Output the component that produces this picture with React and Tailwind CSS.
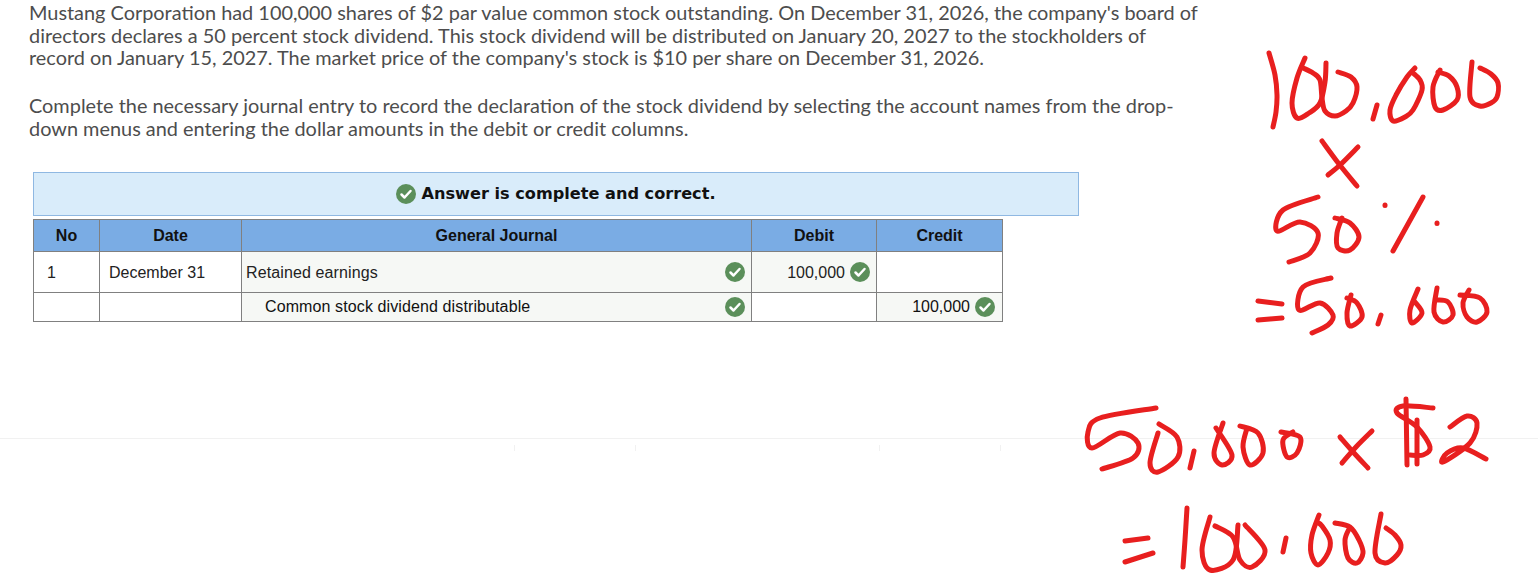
const strokes = [
  // 100,000
  [[1269,53],[1275,75],[1277,95],[1276,112],[1273,127]],
  [[1305,58],[1297,78],[1292,103],[1297,118],[1309,113],[1320,103],[1325,82],[1326,63]],
  [[1303,68],[1313,73],[1320,80],[1322,98],[1325,111],[1335,116],[1346,111],[1353,103],[1357,87],[1351,77],[1338,72]],
  [[1377,105],[1373,119]],
  [[1415,68],[1407,77],[1396,95],[1390,110],[1393,121],[1405,117],[1413,110],[1422,90],[1420,80],[1413,73]],
  [[1440,70],[1433,87],[1435,107],[1443,110],[1457,100],[1457,87],[1449,76],[1438,72]],
  [[1472,62],[1470,97],[1480,106],[1491,103],[1497,97],[1498,83],[1491,74],[1480,68]],
  [[1322,141],[1339,164],[1357,186]],
  [[1358,147],[1340,165],[1328,175]],
  // 50%
  [[1318,197],[1283,210],[1277,231],[1300,222],[1318,233],[1310,253],[1289,262]],
  [[1335,218],[1350,223],[1359,237],[1350,250],[1338,248],[1337,233],[1342,218]],
  [[1385,205],[1385,205.5]],
  [[1423,197],[1393,251]],
  [[1437,223],[1437,223.5]],
  // =50,000
  [[1258,301],[1282,304]],
  [[1258,320],[1282,318]],
  [[1331,278],[1303,287],[1299,310],[1320,303],[1333,315],[1328,325],[1312,333]],
  [[1351,295],[1347,313],[1350,326],[1362,317],[1357,303],[1347,298]],
  [[1381,315],[1378,324]],
  [[1418,289],[1410,310],[1412,323],[1422,313],[1415,302]],
  [[1437,288],[1434,312],[1443,322],[1453,315],[1448,302],[1437,300]],
  [[1460,295],[1480,298],[1487,312],[1477,322],[1467,317],[1463,303],[1469,290]],
  // 50,000 x $2
  [[1156,408],[1100,418],[1088,432],[1092,448],[1120,433],[1138,443],[1133,458],[1102,469]],
  [[1159,424],[1177,437],[1178,457],[1158,472],[1150,463],[1158,433]],
  [[1194,451],[1190,468]],
  [[1223,423],[1214,453],[1222,465],[1232,455],[1216,428]],
  [[1240,426],[1258,433],[1263,453],[1250,465],[1243,447],[1247,428]],
  [[1281,432],[1300,437],[1297,453],[1287,457],[1283,440],[1293,432]],
  [[1340,437],[1354,453],[1368,468]],
  [[1372,431],[1356,447],[1342,463]],
  [[1406,399],[1407,465]],
  [[1417,420],[1417,464]],
  [[1433,408],[1403,406],[1397,413],[1417,427],[1430,447],[1423,455],[1410,455]],
  [[1450,427],[1467,416],[1477,423],[1470,443],[1443,462],[1447,453],[1463,448],[1486,459]],
  // =100,000
  [[1125,541],[1148,538]],
  [[1125,562],[1153,553]],
  [[1187,508],[1185,540],[1183,567]],
  [[1210,517],[1202,550],[1210,570],[1233,560],[1238,525]],
  [[1215,526],[1233,537],[1240,560],[1252,567],[1265,550],[1245,525]],
  [[1286,538],[1283,552]],
  [[1319,515],[1312,535],[1311,553],[1318,565],[1328,553],[1330,540],[1322,526],[1317,522]],
  [[1335,523],[1350,527],[1359,540],[1363,553],[1357,563],[1348,558],[1345,540],[1350,527]],
  [[1381,514],[1375,553],[1385,563],[1397,555],[1401,545],[1395,535],[1386,528]],
];

// smooth the pen points with a catmull-rom curve
function toPath(pts) {
  let d = `M${pts[0][0]} ${pts[0][1]}`;
  for (let i = 0; i < pts.length - 1; i++) {
    const p0 = pts[i - 1] || pts[i];
    const p1 = pts[i];
    const p2 = pts[i + 1];
    const p3 = pts[i + 2] || p2;
    const c1x = p1[0] + (p2[0] - p0[0]) / 6;
    const c1y = p1[1] + (p2[1] - p0[1]) / 6;
    const c2x = p2[0] - (p3[0] - p1[0]) / 6;
    const c2y = p2[1] - (p3[1] - p1[1]) / 6;
    d += ` C${c1x} ${c1y} ${c2x} ${c2y} ${p2[0]} ${p2[1]}`;
  }
  return d;
}

function Check({ className = "" }) {
  return (
    <svg viewBox="0 0 20 20" className={`h-5 w-5 shrink-0 ${className}`}>
      <circle cx="10" cy="10" r="10" fill="#5b8f5a" />
      <path d="M5.5 10.5l3 3 6-6.5" fill="none" stroke="#fff" strokeWidth="2.5" strokeLinecap="round" strokeLinejoin="round" />
    </svg>
  );
}

function Head({ children, className = "" }) {
  return <th className={`border border-[#808080] bg-[#7aace4] p-0 pt-[1px] text-center font-bold text-[#111] ${className}`}>{children}</th>;
}

function Cell({ children, tinted, className = "" }) {
  return (
    <td className={`border border-[#808080] p-0 ${tinted ? "bg-[#f6f8f5]" : "bg-white"} ${className}`}>
      {children}
    </td>
  );
}

export default function App() {
  return (
    <div className="relative h-[576px] w-full overflow-hidden bg-white font-['Lato',sans-serif]">
      <div className="h-[140px] pl-[29px] pt-[1px] text-[19.9px] leading-[22.5px] text-[#4d4d4d]">
        <p>
          Mustang Corporation had 100,000 shares of $2 par value common stock outstanding. On December 31, 2026, the company's board of
          <br />
          directors declares a 50 percent stock dividend. This stock dividend will be distributed on January 20, 2027 to the stockholders of
          <br />
          record on January 15, 2027. The market price of the company's stock is $10 per share on December 31, 2026.
        </p>
        <p className="mt-[25px] leading-[23px]">
          Complete the necessary journal entry to record the declaration of the stock dividend by selecting the account names from the drop-
          <br />
          down menus and entering the dollar amounts in the debit or credit columns.
        </p>
      </div>

      <div className="ml-[33px] mt-[32px] w-[1046px]">
        <div className="flex h-[44px] items-center justify-center gap-[5px] border border-[#8fb8e2] bg-[#d9ecfa] font-['DejaVu_Sans',sans-serif] text-[16.15px] font-bold text-[#111]">
          <Check />
          <span className="pt-[1px]">Answer is complete and correct.</span>
        </div>
        <table className="mt-[3px] w-[970px] table-fixed border-collapse font-['Liberation_Sans',sans-serif] text-[16px] text-[#222]">
          <colgroup>
            <col className="w-[66px]" />
            <col className="w-[142px]" />
            <col className="w-[510px]" />
            <col className="w-[125px]" />
            <col className="w-[126px]" />
          </colgroup>
          <thead>
            <tr className="h-[32px]">
              <Head>No</Head>
              <Head>Date</Head>
              <Head>General Journal</Head>
              <Head>Debit</Head>
              <Head>Credit</Head>
            </tr>
          </thead>
          <tbody>
            <tr className="h-[41px]">
              <Cell className="pl-[13px] pt-[1px]">1</Cell>
              <Cell className="pl-[9px] pt-[1px]">December 31</Cell>
              <Cell tinted>
                <div className="flex items-center justify-between pl-[4px] pr-[6px] tracking-[0.12px]">
                  <span className="pt-[2px]">Retained earnings</span>
                  <Check />
                </div>
              </Cell>
              <Cell tinted>
                <div className="flex items-center justify-end gap-[5px] pr-[6px]">
                  <span className="pt-[1px]">100,000</span>
                  <Check />
                </div>
              </Cell>
              <Cell />
            </tr>
            <tr className="h-[29px]">
              <Cell />
              <Cell />
              <Cell tinted>
                <div className="flex items-center justify-between pl-[23px] pr-[6px] tracking-[0.11px] text-[#111]">
                  Common stock dividend distributable
                  <Check />
                </div>
              </Cell>
              <Cell />
              <Cell tinted>
                <div className="flex items-center justify-end gap-[5px] pr-[7px] text-[#111]">
                  100,000
                  <Check />
                </div>
              </Cell>
            </tr>
          </tbody>
        </table>
      </div>

      <div className="mt-[116px] border-t border-[#f1f1f1]" />
      <div className="mt-[6px] flex">
        <div className="ml-[514px] h-[6px] w-px bg-[#f1f1f1]" />
        <div className="ml-[120px] h-[6px] w-px bg-[#f1f1f1]" />
        <div className="ml-[243px] h-[6px] w-px bg-[#f1f1f1]" />
        <div className="ml-[120px] h-[6px] w-px bg-[#f1f1f1]" />
      </div>

      {/* handwriting sits on top of the page */}
      <svg className="absolute left-0 top-0 h-[576px] w-[1538px]" viewBox="0 0 1538 576" fill="none">
        {strokes.map((pts, i) => (
          <path key={i} d={toPath(pts)} stroke="#e81f1f" strokeWidth="5" strokeLinecap="round" strokeLinejoin="round" />
        ))}
      </svg>
    </div>
  );
}
